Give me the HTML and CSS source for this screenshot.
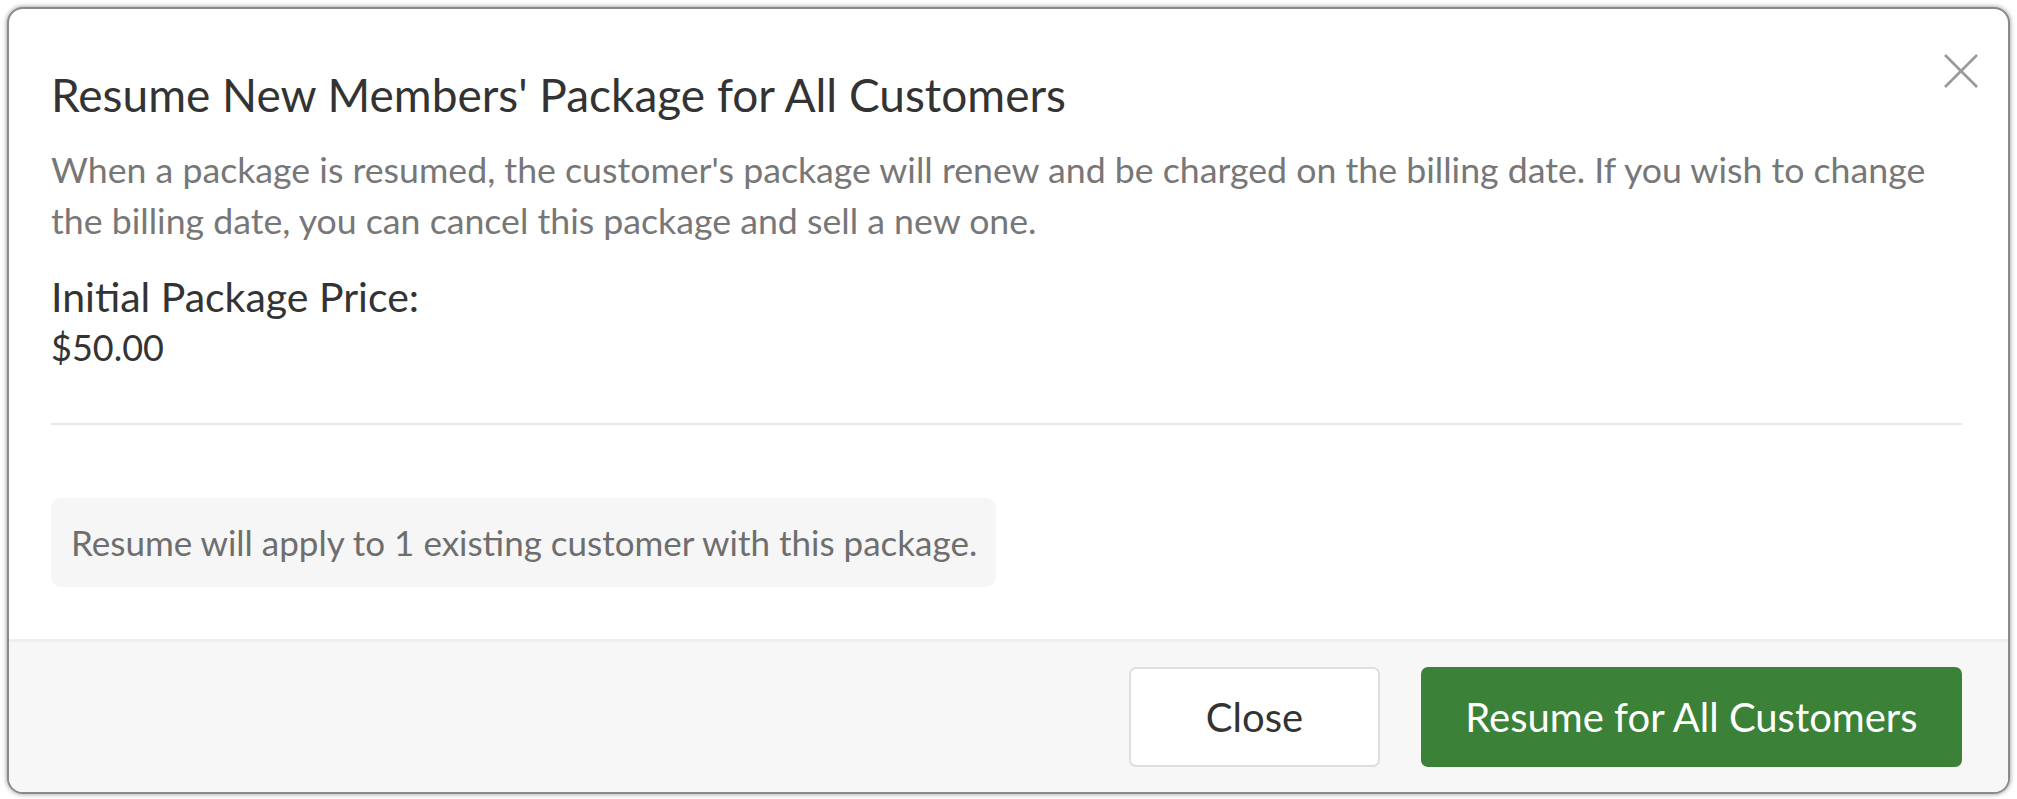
FILE: index.html
```html
<!doctype html>
<html>
<head>
  <link rel="stylesheet" href="styles.css">
</head>
<body>

  <div class="modal">
    <button class="closeX" aria-label="Close">
      <svg width="34" height="34" viewBox="0 0 34 34">
        <line x1="1" y1="1" x2="33" y2="33" />
        <line x1="33" y1="1" x2="1" y2="33" />
      </svg>
    </button>

    <div class="modalBody">
      <h2 class="title">Resume New Members' Package for All Customers</h2>
      <p class="intro">When a package is resumed, the customer's package will renew and be charged on the billing date. If you wish to change the billing date, you can cancel this package and sell a new one.</p>
      <div class="priceLabel">Initial Package Price:</div>
      <div class="priceValue">$50.00</div>
      <hr class="divider">
      <div class="notice">Resume will apply to 1 existing customer with this package.</div>
    </div>

    <div class="modalFooter">
      <button class="btn btnDefault">Close</button>
      <button class="btn btnGreen">Resume for All Customers</button>
    </div>
  </div>

</body>
</html>
```

FILE: styles.css
```css
body{
  margin: 0;
  background: #ffffff;
  font-family: Lato, "Open Sans", sans-serif;
}
.modal{
  position: relative;
  margin: 7px 7px 7px 7px;
  border: 2px solid #8a8a8a;
  border-radius: 16px;
  background: #ffffff;
  overflow: hidden;
  box-shadow: 0 0 5px rgba(0, 0, 0, 0.45);
}
.closeX{
  position: absolute;
  top: 45px;
  right: 30px;
  padding: 0;
  border: none;
  background: none;
  cursor: pointer;
}
.closeX svg{
  display: block;
}
.closeX line{
  stroke: #9a9a9a;
  stroke-width: 2.6;
}
.modalBody{
  padding: 62px 46px 52px 42px;
}
.title{
  margin: 0;
  font-size: 46px;
  line-height: 48px;
  font-weight: 400;
  color: #333333;
}
.intro{
  margin: 25px 0 0 0;
  font-size: 35.7px;
  line-height: 51px;
  color: #777777;
}
.priceLabel{
  margin-top: 26px;
  font-size: 41px;
  line-height: 50px;
  color: #333333;
}
.priceValue{
  font-size: 36px;
  line-height: 50px;
  color: #333333;
}
.divider{
  margin: 51px 0 0 0;
  border: none;
  height: 2px;
  background: #e8e8e8;
}
.notice{
  display: inline-block;
  margin-top: 73px;
  padding: 0 19px 0 20px;
  height: 89px;
  line-height: 89px;
  white-space: nowrap;
  border-radius: 10px;
  background: #f6f6f6;
  font-size: 35px;
  color: #6e6e6e;
}
.modalFooter{
  display: flex;
  justify-content: flex-end;
  gap: 41px;
  padding: 25px 46px 25px 42px;
  border-top: 3px solid #eeeeee;
  background: #f7f7f7;
}
.btn{
  height: 100px;
  border-radius: 7px;
  font-family: Lato, "Open Sans", sans-serif;
  font-size: 40px;
  cursor: pointer;
}
.btnDefault{
  width: 251px;
  border: 2px solid #dedede;
  background: #ffffff;
  color: #333333;
}
.btnGreen{
  width: 541px;
  border: none;
  background: #3b8238;
  color: #ffffff;
}
```
